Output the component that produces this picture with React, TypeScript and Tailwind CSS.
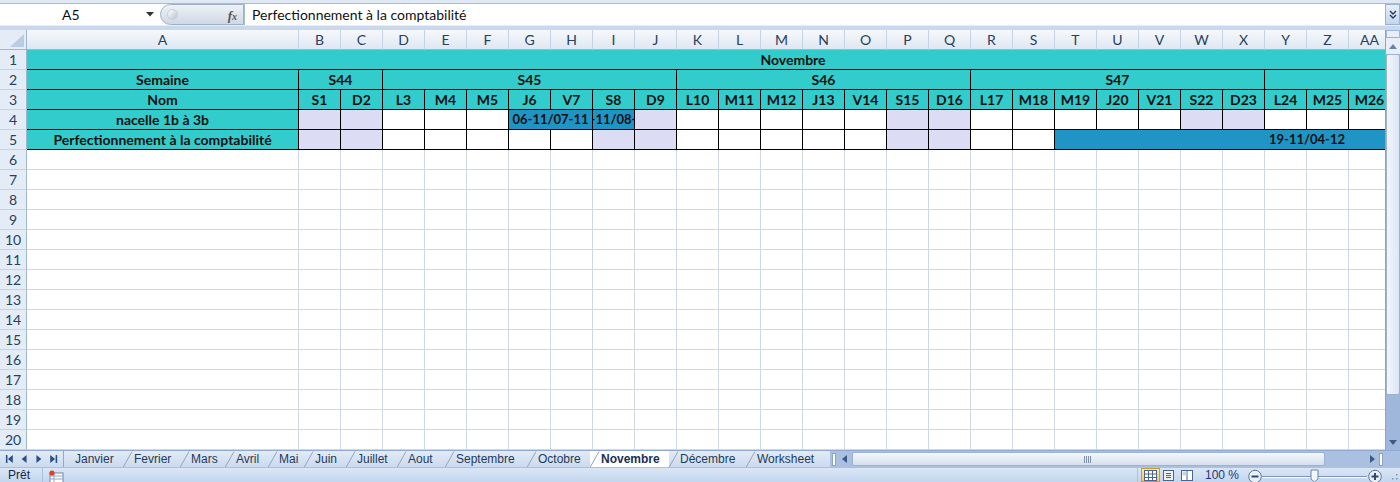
import clsx from 'clsx'

type Bg = 'teal' | 'lav' | 'blue' | 'white'

interface Cell {
  w: string
  bg: Bg
  text?: string
  inner?: string
}

const bgMap: Record<Bg, string> = {
  teal: 'bg-[#33cccc] text-[14px]',
  lav: 'bg-[#dcdcf4] text-[14px]',
  blue: 'bg-[#1e95c5] text-[13px]',
  white: 'bg-white text-[14px]',
}

const COLS = ['A', 'B', 'C', 'D', 'E', 'F', 'G', 'H', 'I', 'J', 'K', 'L', 'M', 'N', 'O', 'P', 'Q', 'R', 'S', 'T', 'U', 'V', 'W', 'X', 'Y', 'Z', 'AA']
const DAYS = ['S1', 'D2', 'L3', 'M4', 'M5', 'J6', 'V7', 'S8', 'D9', 'L10', 'M11', 'M12', 'J13', 'V14', 'S15', 'D16', 'L17', 'M18', 'M19', 'J20', 'V21', 'S22', 'D23', 'L24', 'M25', 'M26']

const one = (bg: Bg, text?: string): Cell => ({ w: 'w-[42px]', bg, text })
const many = (bg: Bg, n: number): Cell[] => Array.from({ length: n }, () => one(bg))

const ROWS: Cell[][] = [
  [{ w: 'w-[1364px]', bg: 'teal', text: 'Novembre', inner: 'w-[1532px]' }],
  [
    { w: 'w-[272px]', bg: 'teal', text: 'Semaine' },
    { w: 'w-[84px]', bg: 'teal', text: 'S44' },
    { w: 'w-[294px]', bg: 'teal', text: 'S45' },
    { w: 'w-[294px]', bg: 'teal', text: 'S46' },
    { w: 'w-[294px]', bg: 'teal', text: 'S47' },
    { w: 'w-[126px]', bg: 'teal' },
  ],
  [{ w: 'w-[272px]', bg: 'teal', text: 'Nom' }, ...DAYS.map((d) => one('teal', d))],
  [
    { w: 'w-[272px]', bg: 'teal', text: 'nacelle 1b à 3b' },
    ...many('lav', 2),
    ...many('white', 3),
    { w: 'w-[84px]', bg: 'blue', text: '06-11/07-11' },
    one('blue', '07-11/08-11'),
    one('lav'),
    ...many('white', 5),
    ...many('lav', 2),
    ...many('white', 5),
    ...many('lav', 2),
    ...many('white', 3),
  ],
  [
    { w: 'w-[272px]', bg: 'teal', text: 'Perfectionnement à la comptabilité' },
    ...many('lav', 2),
    ...many('white', 5),
    ...many('lav', 2),
    ...many('white', 5),
    ...many('lav', 2),
    ...many('white', 2),
    { w: 'w-[336px]', bg: 'blue', text: '19-11/04-12', inner: 'w-[504px]' },
  ],
]

const TABS = [
  { name: 'Janvier', w: 'w-[59px]' },
  { name: 'Fevrier', w: 'w-[57px]' },
  { name: 'Mars', w: 'w-[45px]' },
  { name: 'Avril', w: 'w-[43px]' },
  { name: 'Mai', w: 'w-[36px]' },
  { name: 'Juin', w: 'w-[42px]' },
  { name: 'Juillet', w: 'w-[51px]' },
  { name: 'Aout', w: 'w-[48px]' },
  { name: 'Septembre', w: 'w-[82px]' },
  { name: 'Octobre', w: 'w-[63px]' },
  { name: 'Novembre', w: 'w-[79px]', active: true },
  { name: 'Décembre', w: 'w-[77px]' },
  { name: 'Worksheet', w: 'w-[84px]' },
]

function RowHead({ n }: { n: number }) {
  return (
    <div className="w-[27px] h-full shrink-0 bg-[#e4ecf7] border-r border-b border-r-[#9eb6ce] border-b-[#c5d3e5] flex items-center justify-center text-[14px] text-[#27415f]">
      {n}
    </div>
  )
}

function DataRow({ n, cells }: { n: number; cells: Cell[] }) {
  return (
    <div className="flex h-[20px]">
      <RowHead n={n} />
      {cells.map((c, i) => (
        <div
          key={i}
          className={clsx(
            c.w,
            'h-full shrink-0 border-r border-b border-black flex items-center overflow-hidden whitespace-nowrap font-bold text-[#111]',
            bgMap[c.bg],
            c.inner ? 'justify-start' : 'justify-center'
          )}
        >
          {c.inner ? <div className={clsx(c.inner, 'shrink-0 text-center')}>{c.text}</div> : c.text}
        </div>
      ))}
    </div>
  )
}

function EmptyRow({ n }: { n: number }) {
  return (
    <div className="flex h-[20px]">
      <RowHead n={n} />
      {COLS.map((c) => (
        <div key={c} className={clsx(c === 'A' ? 'w-[272px]' : 'w-[42px]', 'h-full shrink-0 bg-white border-r border-b border-[#d0d7e5]')} />
      ))}
    </div>
  )
}

function FormulaBar() {
  return (
    <div className="h-[30px] flex flex-col bg-[#cfdcee]">
      <div className="h-[4px] bg-[#dfe8f5] border-b border-[#a9bcd6]" />
      <div className="h-[21px] flex bg-white">
        <div className="w-[160px] relative flex items-center">
          <span className="absolute left-[62px] text-[14px] text-[#111]">A5</span>
          <svg className="absolute left-[146px] top-[8px]" width="8" height="5" viewBox="0 0 8 5">
            <path d="M0 0 H8 L4 4.5 Z" fill="#333" />
          </svg>
        </div>
        <div className="w-[84px] h-full relative rounded-l-full bg-gradient-to-b from-[#eef2f7] to-[#cfd8e4] border border-[#9fb0c6] flex items-center">
          <div className="absolute left-[6px] top-[4px] w-[11px] h-[11px] rounded-full bg-gradient-to-br from-white to-[#b9c3cf] border border-[#c7ced8]" />
          <span className="absolute right-[6px] top-[1px] italic font-bold text-[13px] text-[#555] font-['Liberation_Serif',serif]">
            f<span className="text-[10px]">x</span>
          </span>
        </div>
        <div className="flex-1 border-l border-[#a9bcd6] flex items-center pl-[7px] text-[14px] text-[#111]">
          Perfectionnement à la comptabilité
        </div>
        <div className="w-[15px] h-full bg-gradient-to-b from-[#e6eef9] to-[#c4d5ec] border border-[#9bb2d2] flex items-center justify-center">
          <svg width="8" height="10" viewBox="0 0 8 10">
            <path d="M1 1 L4 4 L7 1 M1 5 L4 8 L7 5" stroke="#1f3a63" strokeWidth="1.4" fill="none" />
          </svg>
        </div>
      </div>
      <div className="h-[5px] bg-[#c9d8ec] border-t border-[#e5edf7]" />
    </div>
  )
}

function ColumnHeader() {
  return (
    <div className="flex h-[20px]">
      <div className="w-[27px] h-full shrink-0 relative bg-[#e4ecf7] border-r border-b border-[#9eb6ce]">
        <svg className="absolute right-[2px] bottom-[2px]" width="14" height="13" viewBox="0 0 14 13">
          <path d="M14 0 V13 H0 Z" fill="#b9cce4" />
        </svg>
      </div>
      {COLS.map((c) => (
        <div
          key={c}
          className={clsx(
            c === 'A' ? 'w-[272px]' : 'w-[42px]',
            'h-full shrink-0 bg-gradient-to-b from-[#f6f9fc] to-[#dfe7f2] border-r border-b border-r-[#c5d3e5] border-b-[#9eb6ce] flex items-center justify-center text-[14px] text-[#27415f]'
          )}
        >
          {c}
        </div>
      ))}
    </div>
  )
}

function VScroll() {
  return (
    <div className="w-[15px] h-[420px] flex flex-col bg-[#9fb7da] border-l border-[#8ba6cc]">
      <div className="h-[7px] bg-[#e8eef7] border-b border-[#9bb2d2] mx-[1px] mt-[1px]" />
      <div className="h-[16px] bg-[#e8eef7] flex items-center justify-center">
        <svg width="8" height="5" viewBox="0 0 8 5">
          <path d="M0 5 L4 0 L8 5 Z" fill="#6a83a8" />
        </svg>
      </div>
      <div className="h-[341px] bg-gradient-to-r from-[#f2f6fb] to-[#dce6f3] border border-[#9cb2d0] rounded-[2px]" />
      <div className="flex-1" />
      <div className="h-[16px] flex items-center justify-center">
        <svg width="8" height="5" viewBox="0 0 8 5">
          <path d="M0 0 L4 5 L8 0 Z" fill="#3c5a86" />
        </svg>
      </div>
    </div>
  )
}

function TabBar() {
  return (
    <div className="h-[17px] flex bg-gradient-to-b from-[#e2ebf7] to-[#cbdaee] border-t border-[#8fa9cf] text-[12px] font-['Liberation_Sans',Arial,sans-serif] text-[#243a5c]">
      <div className="w-[64px] h-full shrink-0 border-r border-[#8fa9cf] flex items-center">
        <svg width="64" height="10" viewBox="0 0 64 10">
          <rect x="6" y="1" width="1.6" height="8" fill="#2a4f86" />
          <path d="M8 5 L13 1 V9 Z" fill="#2a4f86" />
          <path d="M22 5 L27 1 V9 Z" fill="#2a4f86" />
          <path d="M42 5 L37 1 V9 Z" fill="#2a4f86" />
          <path d="M51 1 L56 5 L51 9 Z" fill="#2a4f86" />
          <rect x="56.5" y="1" width="1.6" height="8" fill="#2a4f86" />
        </svg>
      </div>
      <div className="w-[766px] h-full shrink-0 flex overflow-hidden">
        {TABS.map((t, i) => (
          <div
            key={t.name}
            className={clsx(
              t.w,
              'h-full shrink-0 relative flex items-center pl-[11px]',
              t.active ? 'bg-white font-bold text-[#1a2f55]' : ''
            )}
          >
            {i > 0 && (
              <svg className="absolute left-0 top-0" width="10" height="17" viewBox="0 0 10 17">
                <path d="M0 16.5 L9 0.5" stroke="#8fa4c2" strokeWidth="1" fill="none" />
              </svg>
            )}
            <span className="relative">{t.name}</span>
          </div>
        ))}
      </div>
      <div className="flex-1 h-full flex items-center bg-[#a9c0e0]">
        <div className="w-[4px] h-[13px] bg-white border border-[#8aa3c6] ml-[2px]" />
        <div className="w-[16px] h-full flex items-center justify-center">
          <svg width="5" height="8" viewBox="0 0 5 8">
            <path d="M5 0 L0 4 L5 8 Z" fill="#3c5a86" />
          </svg>
        </div>
        <div className="w-[473px] h-[14px] bg-gradient-to-b from-[#f4f7fb] to-[#d5dfec] border border-[#9cb2d0] rounded-[2px] flex items-center justify-center">
          <svg width="9" height="7" viewBox="0 0 9 7">
            <path d="M0.5 0 V7 M2.5 0 V7 M4.5 0 V7 M6.5 0 V7" stroke="#7f8fa6" strokeWidth="1" />
          </svg>
        </div>
        <div className="flex-1" />
        <div className="w-[14px] h-full flex items-center justify-center">
          <svg width="5" height="8" viewBox="0 0 5 8">
            <path d="M0 0 L5 4 L0 8 Z" fill="#3c5a86" />
          </svg>
        </div>
        <div className="w-[4px] h-[13px] bg-white border border-[#8aa3c6] mr-[17px]" />
      </div>
    </div>
  )
}

function StatusBar() {
  return (
    <div className="h-[15px] flex items-start bg-gradient-to-b from-[#dae6f5] to-[#c3d6ef] border-t border-[#a8c0e1] text-[12px] font-['Liberation_Sans',Arial,sans-serif] text-[#15284b] relative">
      <span className="ml-[8px] leading-[15px]">Prêt</span>
      <div className="ml-[12px] w-[1px] h-full bg-[#a8c0e1]" />
      <svg className="ml-[5px] mt-[2px]" width="16" height="13" viewBox="0 0 16 13">
        <rect x="2" y="3" width="13" height="10" fill="#fff" stroke="#6d86ad" />
        <path d="M2 6 H15 M2 9 H15 M6 3 V13" stroke="#8fa7c9" />
        <circle cx="4" cy="3" r="2.6" fill="#d9412b" />
      </svg>
      <div className="ml-auto flex items-start h-full">
        <div className="w-[1px] h-full bg-[#a8c0e1] mr-[3px]" />
        <div className="w-[19px] h-[14px] bg-gradient-to-b from-[#fde7a6] to-[#f7c45a] border border-[#c99a3c] flex items-center justify-center">
          <svg width="13" height="11" viewBox="0 0 13 11">
            <rect x="0.5" y="0.5" width="12" height="10" fill="#fff" stroke="#4a6590" />
            <path d="M0.5 4 H12.5 M0.5 7.5 H12.5 M4.5 0.5 V10.5 M8.5 0.5 V10.5" stroke="#4a6590" />
          </svg>
        </div>
        <div className="w-[18px] h-[14px] flex items-center justify-center">
          <svg width="11" height="11" viewBox="0 0 11 11">
            <rect x="0.5" y="0.5" width="10" height="10" fill="#f0f0f0" stroke="#4a6590" />
            <path d="M3 3.5 H8 M3 5.5 H8 M3 7.5 H8" stroke="#4a6590" />
          </svg>
        </div>
        <div className="w-[18px] h-[14px] flex items-center justify-center">
          <svg width="12" height="11" viewBox="0 0 12 11">
            <rect x="0.5" y="0.5" width="11" height="10" fill="#fff" stroke="#4a6590" />
            <path d="M6 0.5 V10.5" stroke="#4a6590" />
            <rect x="1.5" y="1.5" width="4" height="4" fill="#c9d4e4" />
          </svg>
        </div>
        <span className="ml-[9px] leading-[15px] text-[#1e3a78]">100 %</span>
        <div className="ml-[9px] flex items-center h-full pt-[1px]">
          <svg width="138" height="14" viewBox="0 0 138 14">
            <circle cx="7" cy="7.5" r="6.3" fill="#e9eff8" stroke="#5c769c" />
            <path d="M3.5 7.5 H10.5" stroke="#2e4a74" strokeWidth="2" />
            <path d="M14 7.5 H119" stroke="#7d94b5" strokeWidth="1" />
            <path d="M14 8.5 H119" stroke="#fff" strokeWidth="1" />
            <path d="M63 1 H70 V10 L66.5 13 L63 10 Z" fill="#f4f7fb" stroke="#6d84a8" />
            <circle cx="127" cy="7.5" r="6.3" fill="#e9eff8" stroke="#5c769c" />
            <path d="M123.5 7.5 H130.5 M127 4 V11" stroke="#2e4a74" strokeWidth="2" />
          </svg>
        </div>
        <svg className="ml-[6px] mr-[2px] mt-[5px]" width="6" height="8" viewBox="0 0 6 8">
          <rect x="4" y="1" width="1.5" height="1.5" fill="#7d94b5" />
          <rect x="4" y="5" width="1.5" height="1.5" fill="#7d94b5" />
          <rect x="0" y="5" width="1.5" height="1.5" fill="#7d94b5" />
        </svg>
      </div>
    </div>
  )
}

export default function App() {
  return (
    <div className="w-[1400px] h-[482px] overflow-hidden bg-white font-['Lato','Liberation_Sans',sans-serif]">
      <FormulaBar />
      <div className="flex h-[420px]">
        <div className="w-[1385px] h-full overflow-hidden shrink-0">
          <ColumnHeader />
          {ROWS.map((cells, i) => (
            <DataRow key={i} n={i + 1} cells={cells} />
          ))}
          {Array.from({ length: 15 }, (_, i) => (
            <EmptyRow key={i} n={i + 6} />
          ))}
        </div>
        <VScroll />
      </div>
      <TabBar />
      <StatusBar />
    </div>
  )
}
